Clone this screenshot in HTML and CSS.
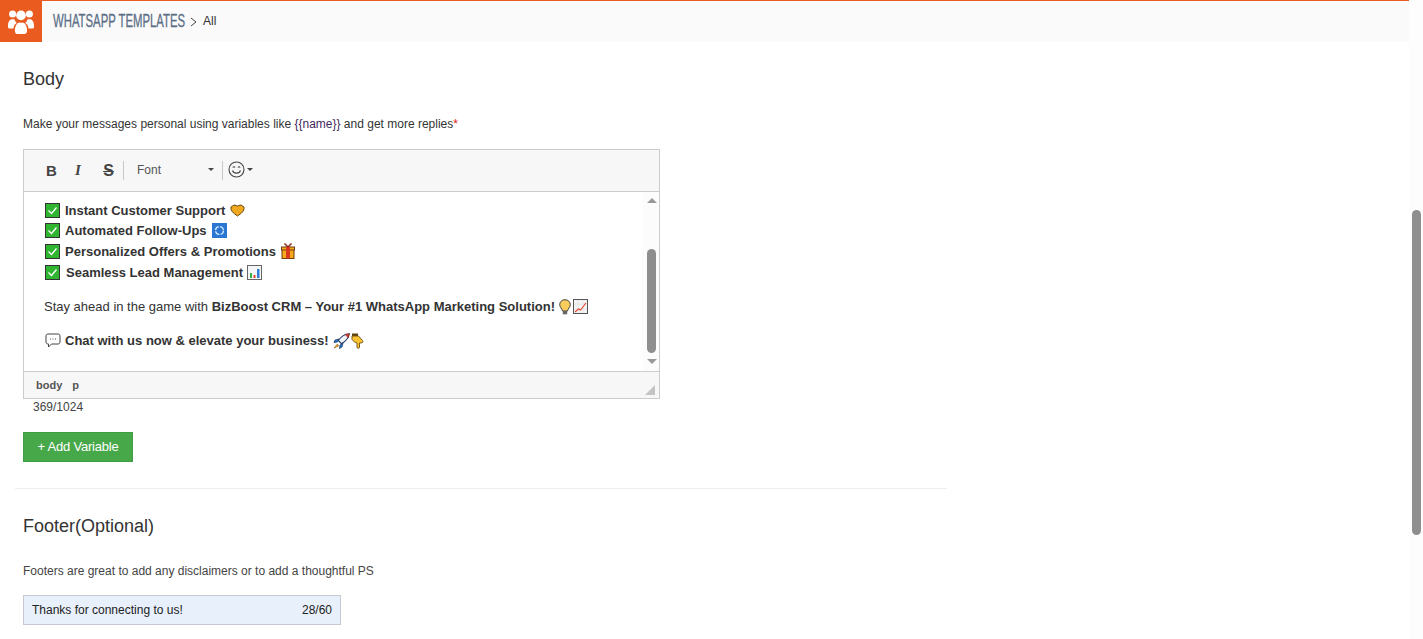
FILE: index.html
```html
<!DOCTYPE html>
<html lang="en">
<head>
<meta charset="utf-8">
<title>WhatsApp Templates</title>
<link rel="stylesheet" href="styles.css">
</head>
<body>
<div class="page">
  <div class="main">
    <header class="topbar">
      <div class="logo">
        <svg width="28" height="27" viewBox="0 0 30 28" fill="#fff"><circle cx="6" cy="6" r="3.800"/><circle cx="24" cy="6" r="3.800"/><circle cx="15" cy="7.500" r="5.200"/><path d="M1 19c0-4 1.500-7 4-7.500h3c.5 2 1.500 3 2.500 4-2 1-3.500 3-3.500 6H3c-1.500 0-2-1-2-2.500z"/><path d="M29 19c0-4-1.500-7-4-7.500h-3c-.5 2-1.500 3-2.500 4 2 1 3.500 3 3.500 6h4c1.500 0 2-1 2-2.500z"/><path d="M8.500 24c0-4.500 1.500-8 4.500-9 1.300.6 2.700.6 4 0 3 1 4.500 4.500 4.500 9 0 2-1 3.500-3 3.500h-7.500c-2 0-2.500-1.500-2.500-3.500z"/></svg>
      </div>
      <span class="crumb-title"><span class="crumb-inner">WHATSAPP TEMPLATES</span></span>
      <svg class="crumb-sep" width="7" height="10" viewBox="0 0 7 10" fill="none" stroke="#444" stroke-width="1"><path d="M1 1l5 4-5 4"/></svg>
      <span class="crumb-sub">All</span>
    </header>

    <section class="content">
      <h2 class="heading heading-body">Body</h2>
      <p class="hint hint-body">Make your messages personal using variables like <span class="var">{{name}}</span> and get more replies<span class="req">*</span></p>

      <div class="editor">
        <div class="toolbar">
          <button class="tool tool-b">B</button>
          <button class="tool tool-i">I</button>
          <button class="tool tool-s">S</button>
          <span class="divider"></span>
          <span class="font-select">Font<span class="caret"></span></span>
          <span class="divider"></span>
          <span class="emoji-btn">
            <svg width="17" height="17" viewBox="0 0 17 17" fill="none" stroke="#444" stroke-width="1.100"><circle cx="8.500" cy="8.500" r="7.500"/><path d="M4.500 9.500c1 3.500 7 3.500 8 0"/><path d="M4.800 6.500c.6-1 1.600-1 2.200 0M10 6.500c.6-1 1.600-1 2.200 0"/></svg>
            <span class="caret"></span>
          </span>
        </div>
        <div class="edit-area">
          <div class="doc">
            <div class="line"><svg class="ico" width="15" height="15" viewBox="0 0 15 15"><rect x=".5" y=".5" width="14" height="14" fill="#2fb52f" stroke="#333"/><path d="M3.500 7.500l3 3 5-6" fill="none" stroke="#fff" stroke-width="1.300"/></svg><b>Instant Customer Support</b><svg class="ico-after" width="15" height="13" viewBox="0 0 15 13"><path d="M1 3l3-2 3.500 1L11 1l3 2c.5 2-.5 4-2.500 6l-4 3-4-3C1.500 7 .5 5 1 3z" fill="#f0a91e" stroke="#6b4a10"/></svg></div>
            <div class="line"><svg class="ico" width="15" height="15" viewBox="0 0 15 15"><rect x=".5" y=".5" width="14" height="14" fill="#2fb52f" stroke="#333"/><path d="M3.500 7.500l3 3 5-6" fill="none" stroke="#fff" stroke-width="1.300"/></svg><b>Automated Follow-Ups</b><svg class="ico-after" width="15" height="15" viewBox="0 0 15 15"><rect width="15" height="15" fill="#2a76d2"/><circle cx="7.500" cy="7.500" r="4" fill="none" stroke="#d8ecff" stroke-width="1.300" stroke-dasharray="5 1.300"/></svg></div>
            <div class="line"><svg class="ico" width="15" height="15" viewBox="0 0 15 15"><rect x=".5" y=".5" width="14" height="14" fill="#2fb52f" stroke="#333"/><path d="M3.500 7.500l3 3 5-6" fill="none" stroke="#fff" stroke-width="1.300"/></svg><b>Personalized Offers &amp; Promotions</b><svg class="ico-after" width="14" height="16" viewBox="0 0 14 16"><rect x="1" y="5" width="12" height="10.500" fill="#f7a81b" stroke="#6e3a10"/><rect x=".5" y="4" width="13" height="3" fill="#f7a81b" stroke="#6e3a10"/><rect x="5" y="4" width="4" height="11.500" fill="#d9381e"/><path d="M7 4L3.500 .5M7 4l3.500-3.500" stroke="#8c2a14" stroke-width="1.500"/></svg></div>
            <div class="line"><svg class="ico" width="15" height="15" viewBox="0 0 15 15"><rect x=".5" y=".5" width="14" height="14" fill="#2fb52f" stroke="#333"/><path d="M3.500 7.500l3 3 5-6" fill="none" stroke="#fff" stroke-width="1.300"/></svg><b class="nudge">Seamless Lead Management</b><svg class="ico-after ico-bars" width="15" height="15" viewBox="0 0 15 15"><rect x=".5" y=".5" width="14" height="14" fill="#f4f6f8" stroke="#666"/><rect x="3" y="8" width="2" height="5" fill="#35b24a"/><rect x="6.500" y="10" width="2" height="3" fill="#e2452c"/><rect x="10" y="4" width="2.500" height="9" fill="#2f7fd6"/></svg></div>
            <p class="para para-stay">Stay ahead in the game with <b>BizBoost CRM – Your #1 WhatsApp Marketing Solution!</b><svg class="ico-after bulb" width="12" height="16" viewBox="0 0 12 16"><path d="M6 .7C2.800.7.700 3 .7 5.700c0 2.500 2.300 3.800 2.800 6.300h5c.5-2.500 2.800-3.800 2.800-6.300C11.300 3 9.200.7 6 .7z" fill="#f9cd5c" stroke="#444"/><rect x="3.800" y="12" width="4.400" height="3.300" fill="#666"/></svg><svg class="ico-after chart" width="15" height="15" viewBox="0 0 15 15"><rect x=".5" y=".5" width="14" height="14" fill="#f4f4f4" stroke="#555"/><path d="M5 1v13M10 1v13M1 5h13M1 10h13" stroke="#ddd" stroke-width=".6"/><path d="M2 13l3.500-3 2 1 5.500-7" fill="none" stroke="#e2452c" stroke-width="1.100"/></svg></p>
            <p class="para para-chat"><svg class="ico ico-bubble" width="16" height="15" viewBox="0 0 16 15" fill="none" stroke="#444" stroke-width="1"><path d="M3 1h10c1.200 0 2 .8 2 2v6c0 1.200-.8 2-2 2H6.500L3.500 14v-3H3c-1.200 0-2-.8-2-2V3c0-1.200.8-2 2-2z" fill="#fff"/><path d="M5 6h1M7.500 6h1M10 6h1"/></svg><b>Chat with us now &amp; elevate your business!</b><svg class="ico-after rocket" width="17" height="16" viewBox="0 0 17 16"><path d="M6 6L2 7l-1 2.500 3.500-.5zM10 10l-1 4-2.500 1.500.5-3.500z" fill="#2f7fd6" stroke="#1f3a66" stroke-width=".8"/><path d="M16.300.7c-4.500.3-8 2.500-11 6.800l3.200 3.200c4.500-2.700 7.300-5.800 7.800-10z" fill="#f2f6fb" stroke="#1f3a66" stroke-width="1.100"/><path d="M16.300.7l-4 1 3 3z" fill="#dd3b2a" stroke="#a12a1e" stroke-width=".6"/><path d="M4.500 11l-3.500 4 4.500-2z" fill="#f39a1e" stroke="#8a5a10" stroke-width=".6"/></svg><svg class="ico-after hand" width="13" height="16" viewBox="0 0 13 16"><rect x="1" y=".5" width="6" height="2.500" fill="#5c4410"/><path d="M1 3h6.500l4 4.500c.8 1 .5 2-.5 2.300L8.500 10v4.300c0 1.300-2.500 1.300-2.500 0V10L3.500 9 1 6.500z" fill="#fcc232" stroke="#6a4f12" stroke-width=".9"/></svg></p>
          </div>
          <div class="inner-scroll">
            <span class="arrow-up"></span>
            <span class="inner-spacer"></span>
            <span class="inner-thumb"></span>
            <span class="arrow-down"></span>
          </div>
        </div>
        <div class="statusbar">
          <span class="path">body</span><span class="path">p</span>
          <span class="grip"></span>
        </div>
      </div>
      <div class="counter">369/1024</div>
      <button class="add-var">+ Add Variable</button>
      <hr class="rule">
      <h2 class="heading heading-footer">Footer(Optional)</h2>
      <p class="hint hint-footer">Footers are great to add any disclaimers or to add a thoughtful PS</p>
      <div class="footer-input"><span>Thanks for connecting to us!</span><span>28/60</span></div>
    </section>
  </div>
  <aside class="page-scroll"><span class="page-thumb"></span></aside>
</div>
</body>
</html>
```

FILE: styles.css
```css
* { box-sizing: border-box; }
html, body { margin: 0; padding: 0; height: 100%; overflow: hidden; background: #fff; }
body { font-family: "Liberation Sans", Arial, sans-serif; color: #333; font-size: 12px; }
.page { display: flex; height: 639px; }
.main { width: 1409px; flex: none; }
.topbar { height: 42px; background: #fafafa; border-top: 1px solid #e85d1f; display: flex; align-items: center; }
.logo { width: 42px; height: 42px; margin-top: -1px; background: #ea5b1f; display: flex; align-items: center; justify-content: center; flex: none; }
.crumb-title { width: 132px; margin-left: 11px; white-space: nowrap; flex: none; }
.crumb-inner { display: inline-block; font-size: 18px; color: #5b6f86; transform: scaleX(.63); transform-origin: left center; -webkit-text-stroke: .3px #5b6f86; }
.crumb-sep { margin-left: 5px; }
.crumb-sub { margin-left: 6px; padding-bottom: 1px; font-size: 12px; color: #333; }
.content { padding: 0 0 0 23px; }
.heading { font-weight: 400; font-size: 18px; line-height: 20px; margin: 0; color: #333; }
.heading-body { padding-top: 27px; }
.hint { margin: 0; line-height: 14px; font-size: 12px; color: #333; }
.hint-body { margin-top: 28px; }
.var { color: #3f2a5c; }
.req { color: #e02020; }
.editor { margin-top: 18px; width: 637px; border: 1px solid #ccc; }
.toolbar { height: 42px; background: #f7f7f7; border-bottom: 1px solid #ccc; display: flex; align-items: center; padding-left: 15px; color: #444; }
.tool { border: 0; background: none; padding: 0; font-family: "Liberation Sans", sans-serif; font-size: 15px; color: #444; width: 27px; text-align: center; }
.tool-b { font-weight: 700; width: 25px; }
.tool-i { font-style: italic; font-weight: 700; font-family: "Liberation Serif", serif; width: 28px; }
.tool-s { font-weight: 700; font-size: 16px; text-decoration: line-through; width: 31px; padding-left: 2px; }
.divider { width: 1px; height: 19px; background: #c8c8c8; }
.font-select { width: 98px; display: flex; align-items: center; justify-content: space-between; padding: 0 8px 2px 13px; font-size: 12px; color: #555; }
.caret { width: 0; height: 0; border: 3px solid transparent; border-top-color: #444; border-bottom: 0; }
.emoji-btn { display: flex; align-items: center; gap: 2px; margin-left: 5px; padding-bottom: 2px; }
.edit-area { height: 179px; display: flex; overflow: hidden; background: #fff; }
.doc { flex: 1; padding: 7.700px 0 0 21px; font-size: 13px; color: #333; }
.line { height: 20.700px; display: flex; align-items: center; }
.ico { margin-right: 5px; flex: none; }
.ico-after { margin-left: 5px; flex: none; }
.nudge { margin-left: 1px; }
.ico-bars { margin-left: 4px; }
.para { margin: 0; display: flex; align-items: center; height: 20px; }
.para b { white-space: pre; }
.para-stay { margin: 14.300px 0 0 -1px; white-space: pre; }
.para-chat { margin-top: 14px; }
.ico-bubble { margin-right: 4px; }
.bulb { margin-left: 4px; }
.chart { margin-left: 2px; }
.rocket { margin-left: 4px; }
.hand { margin-left: 1px; }
.inner-scroll { width: 17px; background: #fcfcfc; display: flex; flex-direction: column; align-items: center; padding: 6px 0 0 2px; }
.arrow-up { width: 0; height: 0; border: 5px solid transparent; border-top: 0; border-bottom: 5px solid #999; flex: none; }
.inner-spacer { height: 46px; flex: none; }
.inner-thumb { width: 9px; height: 104px; background: #8e8e8e; border-radius: 5px; flex: none; }
.arrow-down { width: 0; height: 0; margin-top: 6px; border: 5px solid transparent; border-bottom: 0; border-top: 5px solid #999; flex: none; }
.statusbar { position: relative; height: 27px; background: #f7f7f7; border-top: 1px solid #ccc; display: flex; align-items: center; padding: 0 0 1px 12px; gap: 10px; font-size: 11px; font-weight: 700; color: #555; }
.grip { position: absolute; right: 4px; bottom: 3px; width: 0; height: 0; border-style: solid; border-width: 0 0 10px 10px; border-color: transparent transparent #c4c4c4 transparent; }
.counter { margin: 1px 0 0 10px; line-height: 14px; font-size: 12px; color: #444; }
.add-var { display: block; margin-top: 18px; width: 110px; height: 30px; background: #47a84a; border: 1px solid #3f9e44; color: #fff; font-family: "Liberation Sans", sans-serif; font-size: 13px; padding: 0 0 2px; letter-spacing: -.2px; }
.rule { margin: 26px 0 0 -8px; width: 932px; height: 1px; border: 0; background: #eee; }
.heading-footer { margin-top: 27px; }
.hint-footer { margin-top: 28px; color: #444; }
.footer-input { margin-top: 17px; width: 318px; height: 30px; background: #e8f0fc; border: 1px solid #c4c8d0; display: flex; align-items: center; justify-content: space-between; padding: 0 8px; font-size: 12px; color: #222; }
.page-scroll { width: 14px; background: #fdfdfd; padding: 210px 1px 0 3px; }
.page-thumb { display: block; width: 9px; height: 325px; background: #8e8e8e; border-radius: 5px; }
```
